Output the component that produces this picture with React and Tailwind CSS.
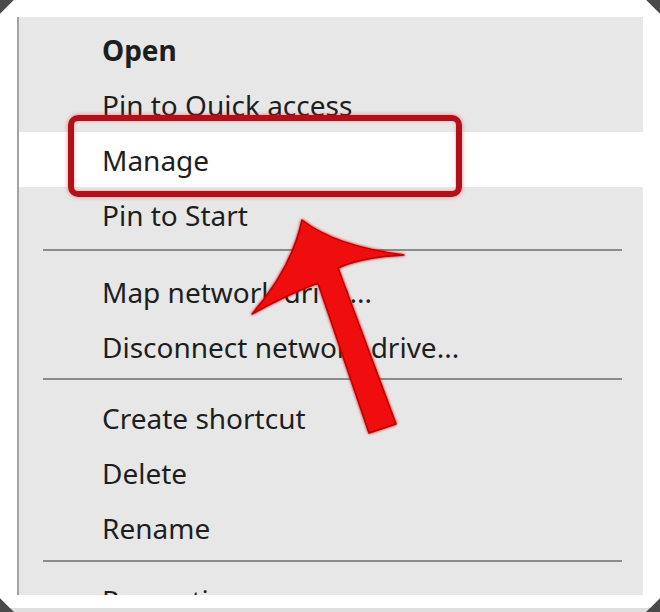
import React from "react";

const Row = ({ children, bold, highlight }) => (
  <div
    className={`h-[55px] flex items-center pl-[83px] ${highlight ? "bg-white" : ""} ${
      bold ? "font-bold" : ""
    }`}
  >
    <span>{children}</span>
  </div>
);

const Sep = ({ mt, mb }) => (
  <div className={`h-[2px] bg-[#8c8c8c] ml-[24px] mr-[21px] ${mt} ${mb}`} />
);

export default function App() {
  return (
    <div className="relative w-[660px] h-[612px] bg-[#4a4a4a] overflow-hidden">
      <div className="w-full h-full bg-[#dedede] [clip-path:polygon(14px_0,calc(100%-14px)_0,100%_14px,100%_calc(100%-14px),calc(100%-14px)_100%,14px_100%,0_calc(100%-14px),0_14px)]">
        <div className="w-full h-[608px] bg-white p-[17px] pb-[13px]">
          <div
            className="h-full bg-[#e7e7e7] border-l-2 border-[#a3a3a3] overflow-hidden text-[28px] text-[#1e1e1e] tracking-[0px] pt-[5px]"
            style={{ fontFamily: '"Segoe UI", "Noto Sans", "Open Sans", sans-serif' }}
          >
            <Row bold>Open</Row>
            <Row>Pin to Quick access</Row>
            <Row highlight>Manage</Row>
            <Row>Pin to Start</Row>
            <Sep mt="mt-[7px]" mb="mb-[13px]" />
            <Row>Map network drive...</Row>
            <Row>Disconnect network drive...</Row>
            <Sep mt="mt-[4px]" mb="mb-[10px]" />
            <Row>Create shortcut</Row>
            <Row>Delete</Row>
            <Row>Rename</Row>
            <Sep mt="mt-[5px]" mb="mb-[10px]" />
            <Row>Properties</Row>
          </div>
        </div>
      </div>

      {/* red highlight box */}
      <div className="absolute left-[68px] top-[115px] w-[394px] h-[82px] border-[6px] border-[#b0111b] rounded-[10px] shadow-[0_0_4px_rgba(255,40,40,0.6),inset_0_0_3px_rgba(255,40,40,0.5)] pointer-events-none" />

      {/* red arrow */}
      <svg
        className="absolute inset-0 pointer-events-none"
        width="660"
        height="612"
        viewBox="0 0 660 612"
      >
        <defs>
          <filter id="glow" x="-20%" y="-20%" width="140%" height="140%">
            <feGaussianBlur stdDeviation="1.6" result="b" />
            <feMerge>
              <feMergeNode in="b" />
              <feMergeNode in="SourceGraphic" />
            </feMerge>
          </filter>
        </defs>
        <path
          d="M302,220 Q335,246 404,255 Q362,257 338,268 L396,424 L369,433 L318,283 Q284,296 252,314 Q292,268 302,220 Z"
          fill="#f00a0a"
          stroke="#c00000"
          strokeWidth="1.5"
          strokeLinejoin="round"
          filter="url(#glow)"
        />
      </svg>
    </div>
  );
}
